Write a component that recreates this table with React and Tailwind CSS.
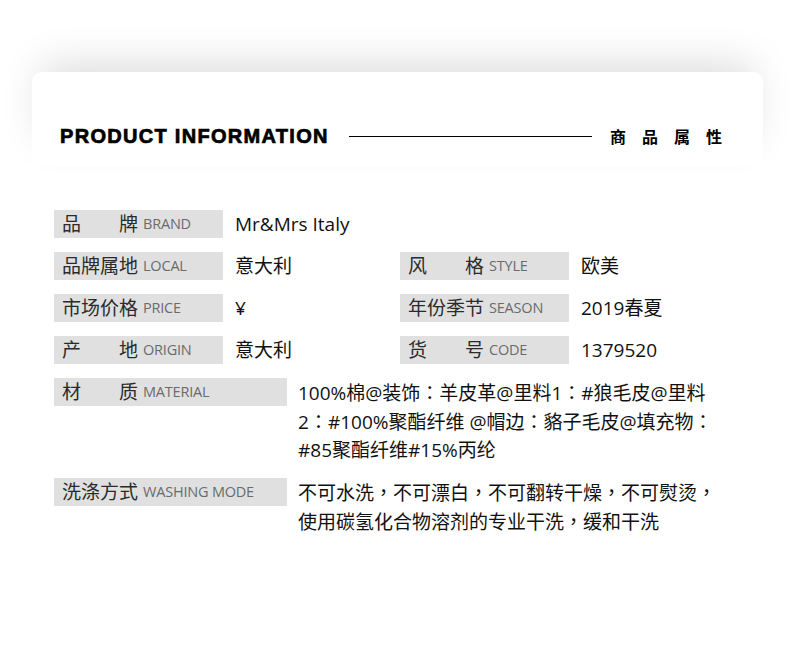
const font = { fontFamily: '"Open Sans", "Noto Sans CJK SC", sans-serif' };
const tc = { fontFamily: '"Noto Sans CJK TC", sans-serif' };

const leftRows = [
  { cn: ["品", "牌"], en: "BRAND", value: "Mr&Mrs Italy" },
  { cn: ["品牌属地"], en: "LOCAL", value: "意大利", right: { cn: ["风", "格"], en: "STYLE", value: "欧美" } },
  { cn: ["市场价格"], en: "PRICE", value: "¥", right: { cn: ["年份季节"], en: "SEASON", value: "2019春夏" } },
  { cn: ["产", "地"], en: "ORIGIN", value: "意大利", right: { cn: ["货", "号"], en: "CODE", value: "1379520" } },
];

// full-width colon and comma sit centred in the reference, as in a TC font
function Punct({ text }) {
  return text.split(/([：，])/).map((part, i) =>
    part === "：" || part === "，" ? (
      <span key={i} style={tc}>
        {part}
      </span>
    ) : (
      part
    )
  );
}

function Label({ cn, en, wide }) {
  return (
    <div
      className={`flex h-[28px] shrink-0 items-center bg-[#e0e0e0] pl-[8px] ${wide ? "w-[233px]" : "w-[169px]"}`}
    >
      <span className="flex w-[76px] justify-between text-[19px] leading-none text-[#2b2b2b]">
        {cn.map((c) => (
          <span key={c}>{c}</span>
        ))}
      </span>
      <span className="ml-[5px] text-[14.5px] leading-none tracking-[-0.2px] text-[#6b6b6b]">{en}</span>
    </div>
  );
}

function Field({ cn, en, value }) {
  return (
    <div className="flex items-center">
      <Label cn={cn} en={en} />
      <span className="ml-[12px] text-[19px] leading-none text-[#111]">{value}</span>
    </div>
  );
}

function LongField({ cn, en, lines }) {
  return (
    <div className="flex items-start">
      <Label cn={cn} en={en} wide />
      <div className="ml-[11px] text-[19px] leading-[28px] text-[#111]">
        {lines.map((l) => (
          <div key={l} className="whitespace-nowrap">
            <Punct text={l} />
          </div>
        ))}
      </div>
    </div>
  );
}

export default function App() {
  return (
    <div className="min-h-[646px] w-[800px] bg-white pt-[72px]" style={font}>
      <div className="ml-[32px] mr-[37px] h-[94px] rounded-t-[10px] bg-white pt-[52px] pl-[28px] pr-[41px] shadow-[0_-18px_40px_-10px_rgba(0,0,0,0.14)]">
        <div className="flex h-[24px] items-center">
          <h1
            className="text-[20px] font-bold leading-none tracking-[1.3px] text-black [-webkit-text-stroke:0.7px_black]"
            style={{ fontFamily: '"Liberation Sans", Arial, sans-serif' }}
          >
            PRODUCT INFORMATION
          </h1>
          <div className="ml-[20px] h-px flex-1 bg-black" />
          <div
            className="ml-[18px] flex gap-[16px] text-[16px] font-bold leading-none text-black"
            style={{ fontFamily: '"Noto Sans CJK SC", sans-serif' }}
          >
            <span>商</span>
            <span>品</span>
            <span>属</span>
            <span>性</span>
          </div>
        </div>
      </div>

      <div className="mt-[44px] flex flex-col gap-[14px] pl-[54px]">
        {leftRows.map((r) => (
          <div key={r.en} className="grid grid-cols-[346px_1fr]">
            <Field cn={r.cn} en={r.en} value={r.value} />
            {r.right && <Field cn={r.right.cn} en={r.right.en} value={r.right.value} />}
          </div>
        ))}
        <LongField
          cn={["材", "质"]}
          en="MATERIAL"
          lines={[
            "100%棉@装饰：羊皮革@里料1：#狼毛皮@里料",
            "2：#100%聚酯纤维 @帽边：貉子毛皮@填充物：",
            "#85聚酯纤维#15%丙纶",
          ]}
        />
        <LongField
          cn={["洗涤方式"]}
          en="WASHING MODE"
          lines={["不可水洗，不可漂白，不可翻转干燥，不可熨烫，", "使用碳氢化合物溶剂的专业干洗，缓和干洗"]}
        />
      </div>
    </div>
  );
}
